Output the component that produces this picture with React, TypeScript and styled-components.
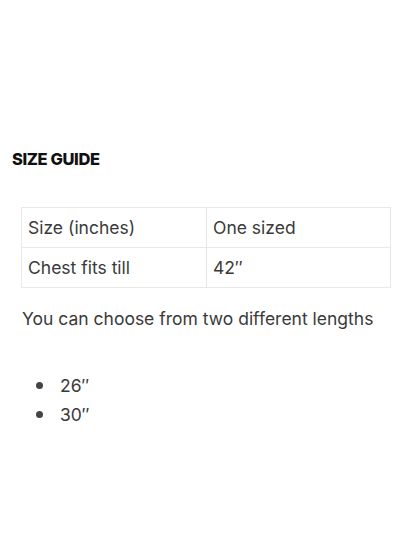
import React from "react";
import styled, { createGlobalStyle } from "styled-components";

const Global = createGlobalStyle`
  html, body { margin: 0; padding: 0; background: #fff; }
  body { font-family: Inter, "Liberation Sans", sans-serif; }
`;

const Page = styled.div`
  width: 400px;
  height: 560px;
  box-sizing: border-box;
  padding: 149px 9px 0 21px;
  display: flex;
  flex-direction: column;
`;

const Heading = styled.h2`
  margin: 0 0 0 -9px;
  font-family: Inter, "Liberation Sans", sans-serif;
  font-weight: 800;
  font-size: 16.5px;
  line-height: 20px;
  letter-spacing: -0.4px;
  color: #111;
`;

const Table = styled.table`
  margin-top: 38px;
  width: 370px;
  border-collapse: collapse;
`;

const Cell = styled.td<{ $w?: string }>`
  border: 1px solid #e8e8e8;
  height: 40px;
  box-sizing: border-box;
  padding: 0 6px;
  font-size: 17.5px;
  color: #3a3a3a;
  width: ${(p) => p.$w || "auto"};
  vertical-align: middle;
`;

const Para = styled.p`
  margin: 19px 0 0 1px;
  font-size: 17.5px;
  line-height: 24px;
  color: #3a3a3a;
`;

const List = styled.ul`
  margin: 40px 0 0;
  padding: 0 0 0 39px;
  list-style: none;
  font-size: 17.5px;
  line-height: 29px;
  color: #3a3a3a;
`;

const Item = styled.li`
  position: relative;
  &::before {
    content: "";
    position: absolute;
    left: -24px;
    top: 11px;
    width: 7px;
    height: 7px;
    border-radius: 50%;
    background: #444;
  }
`;

export default function App() {
  return (
    <>
      <Global />
      <Page>
        <Heading>SIZE GUIDE</Heading>
        <Table>
          <tbody>
            <tr>
              <Cell $w="185px">Size (inches)</Cell>
              <Cell>One sized</Cell>
            </tr>
            <tr>
              <Cell $w="185px">Chest fits till</Cell>
              <Cell>42″</Cell>
            </tr>
          </tbody>
        </Table>
        <Para>You can choose from two different lengths</Para>
        <List>
          <Item>26″</Item>
          <Item>30″</Item>
        </List>
      </Page>
    </>
  );
}
